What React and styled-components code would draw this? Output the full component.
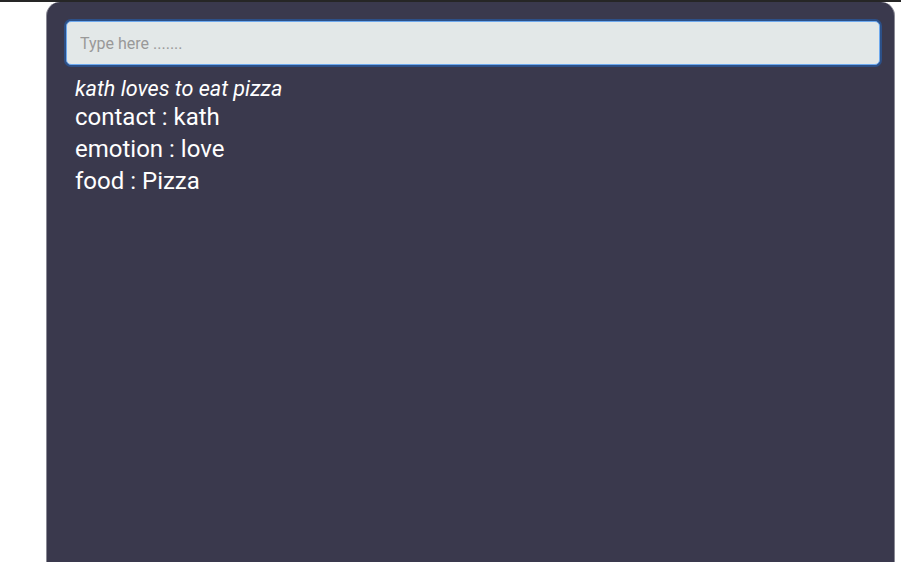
import React from "react";
import styled, { createGlobalStyle } from "styled-components";

const Global = createGlobalStyle`
  html, body { margin: 0; padding: 0; background: #fff; }
  body { font-family: Roboto, "Noto Sans", sans-serif; }
`;

const Page = styled.div`
  border-top: 2px solid #262626;
  height: 560px;
  overflow: hidden;
  padding-left: 46px;
`;

const Card = styled.div`
  width: 849px;
  height: 600px;
  box-sizing: border-box;
  background: #3a394d;
  border-radius: 14px;
  padding: 19px 14px 0 19px;
  border-left: 1px solid #8a8a95;
  border-right: 1px solid #8a8a95;
`;

const SearchInput = styled.input`
  width: 100%;
  height: 44px;
  box-sizing: border-box;
  background: #e3e8e8;
  border: 1px solid #6ea9ee;
  border-radius: 5px;
  box-shadow: 0 0 0 2px #2c5088;
  padding: 0 13px;
  font-family: Roboto, sans-serif;
  font-size: 16px;
  color: #333;
  outline: none;

  &::placeholder { color: #999; }
`;

const Result = styled.div`
  padding: 12px 0 0 9px;
  color: #fff;
`;

const Sentence = styled.div`
  font-style: italic;
  font-size: 21.6px;
  line-height: 24px;
`;

const Entity = styled.div`
  font-size: 24px;
  line-height: 32px;
`;

const entities = [
  ["contact", "kath"],
  ["emotion", "love"],
  ["food", "Pizza"],
];

export default function App() {
  return (
    <>
      <Global />
      <Page>
        <Card>
          <SearchInput placeholder="Type here ......." />
          <Result>
            <Sentence>kath loves to eat pizza</Sentence>
            {entities.map(([k, v]) => (
              <Entity key={k}>{k} : {v}</Entity>
            ))}
          </Result>
        </Card>
      </Page>
    </>
  );
}
